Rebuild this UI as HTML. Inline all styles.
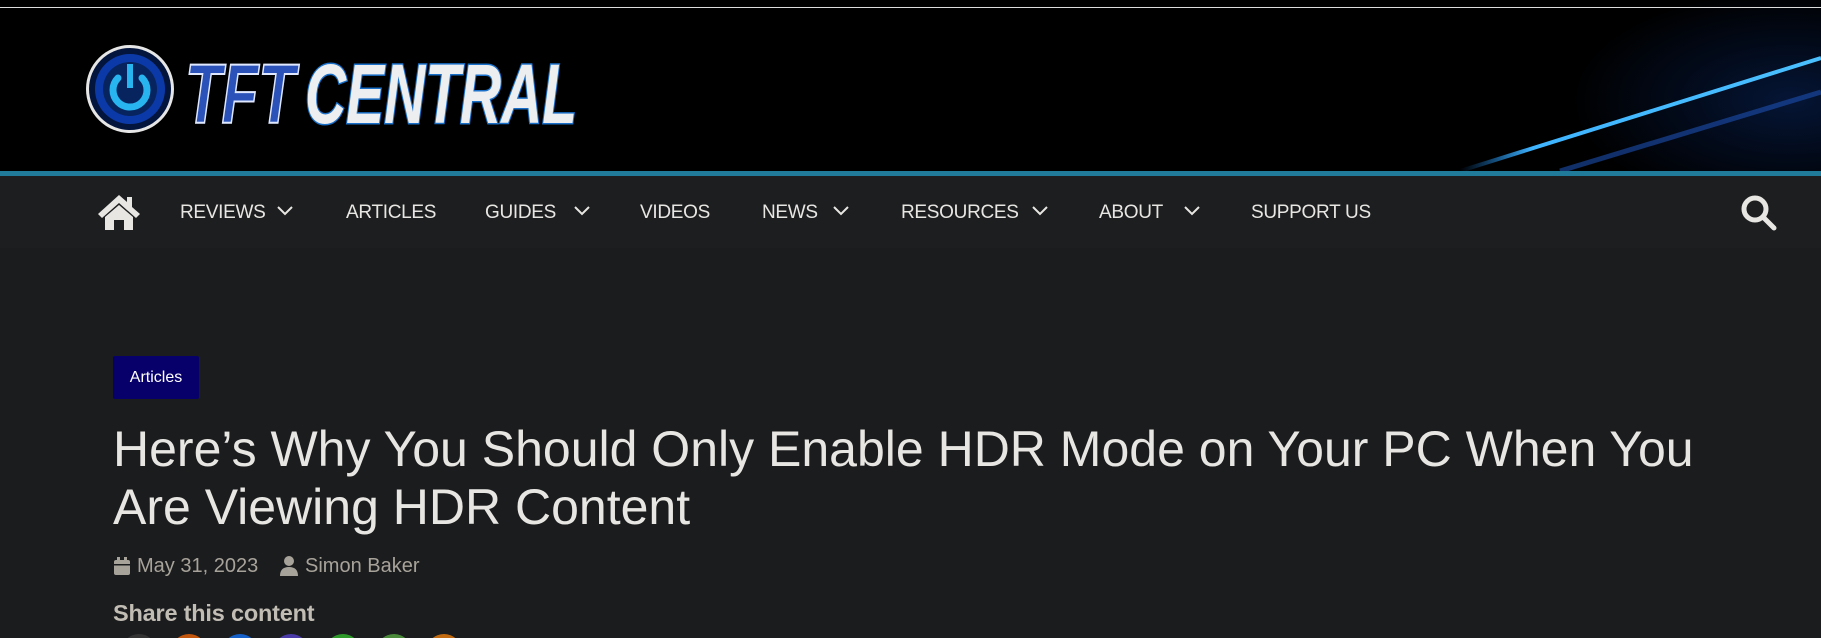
<!DOCTYPE html>
<html><head><meta charset="utf-8"><style>
*{margin:0;padding:0;box-sizing:border-box}
html,body{width:1821px;height:638px;overflow:hidden}
body{background:#1b1c1e;font-family:"Liberation Sans",sans-serif;position:relative}
.hdr{position:absolute;left:0;top:0;width:1821px;height:171px;background:#000;overflow:hidden}
.topline{position:absolute;left:0;top:7px;width:1821px;height:1px;background:#ddd;z-index:2}
.bar{position:absolute;left:0;top:171px;width:1821px;height:5px;background:#207a9a}
.nav{position:absolute;left:0;top:176px;width:1821px;height:72px;background:#1c1e1f}
.ni{position:absolute;top:201px;color:#e8e6e3;font-size:19px;line-height:24px;letter-spacing:-0.3px}
.ni svg{position:absolute;top:4px}
.badge{position:absolute;left:113px;top:356px;width:86px;height:43px;background:#07006b;border-radius:2px;color:#fff;font-size:16px;line-height:43px;text-align:center}
.title{position:absolute;left:113px;top:420px;width:1650px;color:#e8e6e3;font-size:50px;line-height:58px}
.meta{position:absolute;top:554px;color:#a8a39a;font-size:20px;line-height:24px}
.share{position:absolute;left:113px;top:600px;color:#c2bdb4;font-size:23.5px;font-weight:bold;letter-spacing:-0.2px}
.clip{position:absolute;left:0;top:630px;width:600px;height:8px;overflow:hidden}
.c{position:absolute;top:4px;width:36px;height:36px;border-radius:50%}
</style></head><body>
<div class="hdr">
<div class="topline"></div>
<svg width="1821" height="171" style="position:absolute;left:0;top:0">
<defs><radialGradient id="g" cx="0.5" cy="0.5" r="0.5"><stop offset="0" stop-color="#0a2a6a"/><stop offset="1" stop-color="#000"/></radialGradient>
<linearGradient id="ln" x1="0" y1="0" x2="1" y2="0"><stop offset="0" stop-color="#1a8fff" stop-opacity="0"/><stop offset="0.2" stop-color="#3fb4ff"/><stop offset="1" stop-color="#4ac0ff"/></linearGradient></defs>
<ellipse cx="1790" cy="100" rx="220" ry="110" fill="url(#g)" opacity="0.5"/>
<line x1="1460" y1="171" x2="1821" y2="58" stroke="url(#ln)" stroke-width="4"/>
<line x1="1560" y1="171" x2="1821" y2="92" stroke="#1d4fb0" stroke-width="5" opacity="0.6"/>
<circle cx="130" cy="89" r="44" fill="#fff" opacity="0.9"/>
<circle cx="130" cy="89" r="41" fill="#04153d"/>
<circle cx="130" cy="89" r="35" fill="#0b3aa8"/>
<circle cx="130" cy="89" r="27" fill="#08245e"/>
<path d="M118 78 A17 17 0 1 0 142 78" fill="none" stroke="#27b4ef" stroke-width="7" stroke-linecap="round"/>
<rect x="127" y="64" width="6" height="24" fill="#27b4ef"/>
<text x="185" y="123" font-family="Liberation Sans" font-weight="bold" font-style="italic" font-size="84" textLength="110" lengthAdjust="spacingAndGlyphs" fill="#2a52b8" stroke="#dfe8ff" stroke-width="2">TFT</text>
<text x="305" y="123" font-family="Liberation Sans" font-weight="bold" font-style="italic" font-size="84" textLength="272" lengthAdjust="spacingAndGlyphs" fill="#eceeef" stroke="#1a6fc8" stroke-width="3" paint-order="stroke">CENTRAL</text>
</svg>
</div>
<div class="bar"></div>
<div class="nav"></div>
<svg style="position:absolute;left:96px;top:193px" width="46" height="38" viewBox="0 0 46 38"><path d="M23 2 L2 21 L6 25 L23 10 L40 25 L44 21 L36 14 L36 4 L31 4 L31 9 Z" fill="#e8e6e3"/><path d="M9 24 L23 12 L37 24 L37 37 L28 37 L28 27 L18 27 L18 37 L9 37 Z" fill="#e8e6e3"/></svg>
<div class="ni" style="left:180px">REVIEWS<svg style="left:96px" width="18" height="12" viewBox="0 0 18 12"><path d="M2 2 L9 9 L16 2" fill="none" stroke="#e8e6e3" stroke-width="2"/></svg></div>
<div class="ni" style="left:346px">ARTICLES</div>
<div class="ni" style="left:485px">GUIDES<svg style="left:88px" width="18" height="12" viewBox="0 0 18 12"><path d="M2 2 L9 9 L16 2" fill="none" stroke="#e8e6e3" stroke-width="2"/></svg></div>
<div class="ni" style="left:640px">VIDEOS</div>
<div class="ni" style="left:762px">NEWS<svg style="left:70px" width="18" height="12" viewBox="0 0 18 12"><path d="M2 2 L9 9 L16 2" fill="none" stroke="#e8e6e3" stroke-width="2"/></svg></div>
<div class="ni" style="left:901px">RESOURCES<svg style="left:130px" width="18" height="12" viewBox="0 0 18 12"><path d="M2 2 L9 9 L16 2" fill="none" stroke="#e8e6e3" stroke-width="2"/></svg></div>
<div class="ni" style="left:1099px">ABOUT<svg style="left:84px" width="18" height="12" viewBox="0 0 18 12"><path d="M2 2 L9 9 L16 2" fill="none" stroke="#e8e6e3" stroke-width="2"/></svg></div>
<div class="ni" style="left:1251px">SUPPORT US</div>
<svg style="position:absolute;left:1740px;top:194px" width="38" height="38" viewBox="0 0 38 38"><circle cx="15" cy="15" r="11" fill="none" stroke="#e8e6e3" stroke-width="5"/><path d="M23 23 L34 34" stroke="#e8e6e3" stroke-width="5" stroke-linecap="round"/></svg>
<div class="badge">Articles</div>
<div class="title">Here’s Why You Should Only Enable HDR Mode on Your PC When You<br>Are Viewing HDR Content</div>
<svg style="position:absolute;left:114px;top:557px" width="16" height="18" viewBox="0 0 16 18"><rect x="0" y="3" width="16" height="15" rx="2" fill="#a8a39a"/><rect x="3" y="0" width="3" height="5" fill="#a8a39a"/><rect x="10" y="0" width="3" height="5" fill="#a8a39a"/><rect x="0" y="7" width="16" height="1.5" fill="#1b1c1e"/></svg>
<div class="meta" style="left:137px">May 31, 2023</div>
<svg style="position:absolute;left:280px;top:556px" width="18" height="20" viewBox="0 0 18 20"><circle cx="9" cy="5" r="5" fill="#a8a39a"/><path d="M0 20 Q0 11 9 11 Q18 11 18 20 Z" fill="#a8a39a"/></svg>
<div class="meta" style="left:305px">Simon Baker</div>
<div class="share">Share this content</div>
<div class="clip">
<div class="c" style="left:121px;background:#333"></div>
<div class="c" style="left:171px;background:#c2560d"></div>
<div class="c" style="left:222px;background:#1560c8"></div>
<div class="c" style="left:273px;background:#4a3aa8"></div>
<div class="c" style="left:325px;background:#2e9a2a"></div>
<div class="c" style="left:376px;background:#4a8a3a"></div>
<div class="c" style="left:426px;background:#c26a10"></div>
</div>
</body></html>
